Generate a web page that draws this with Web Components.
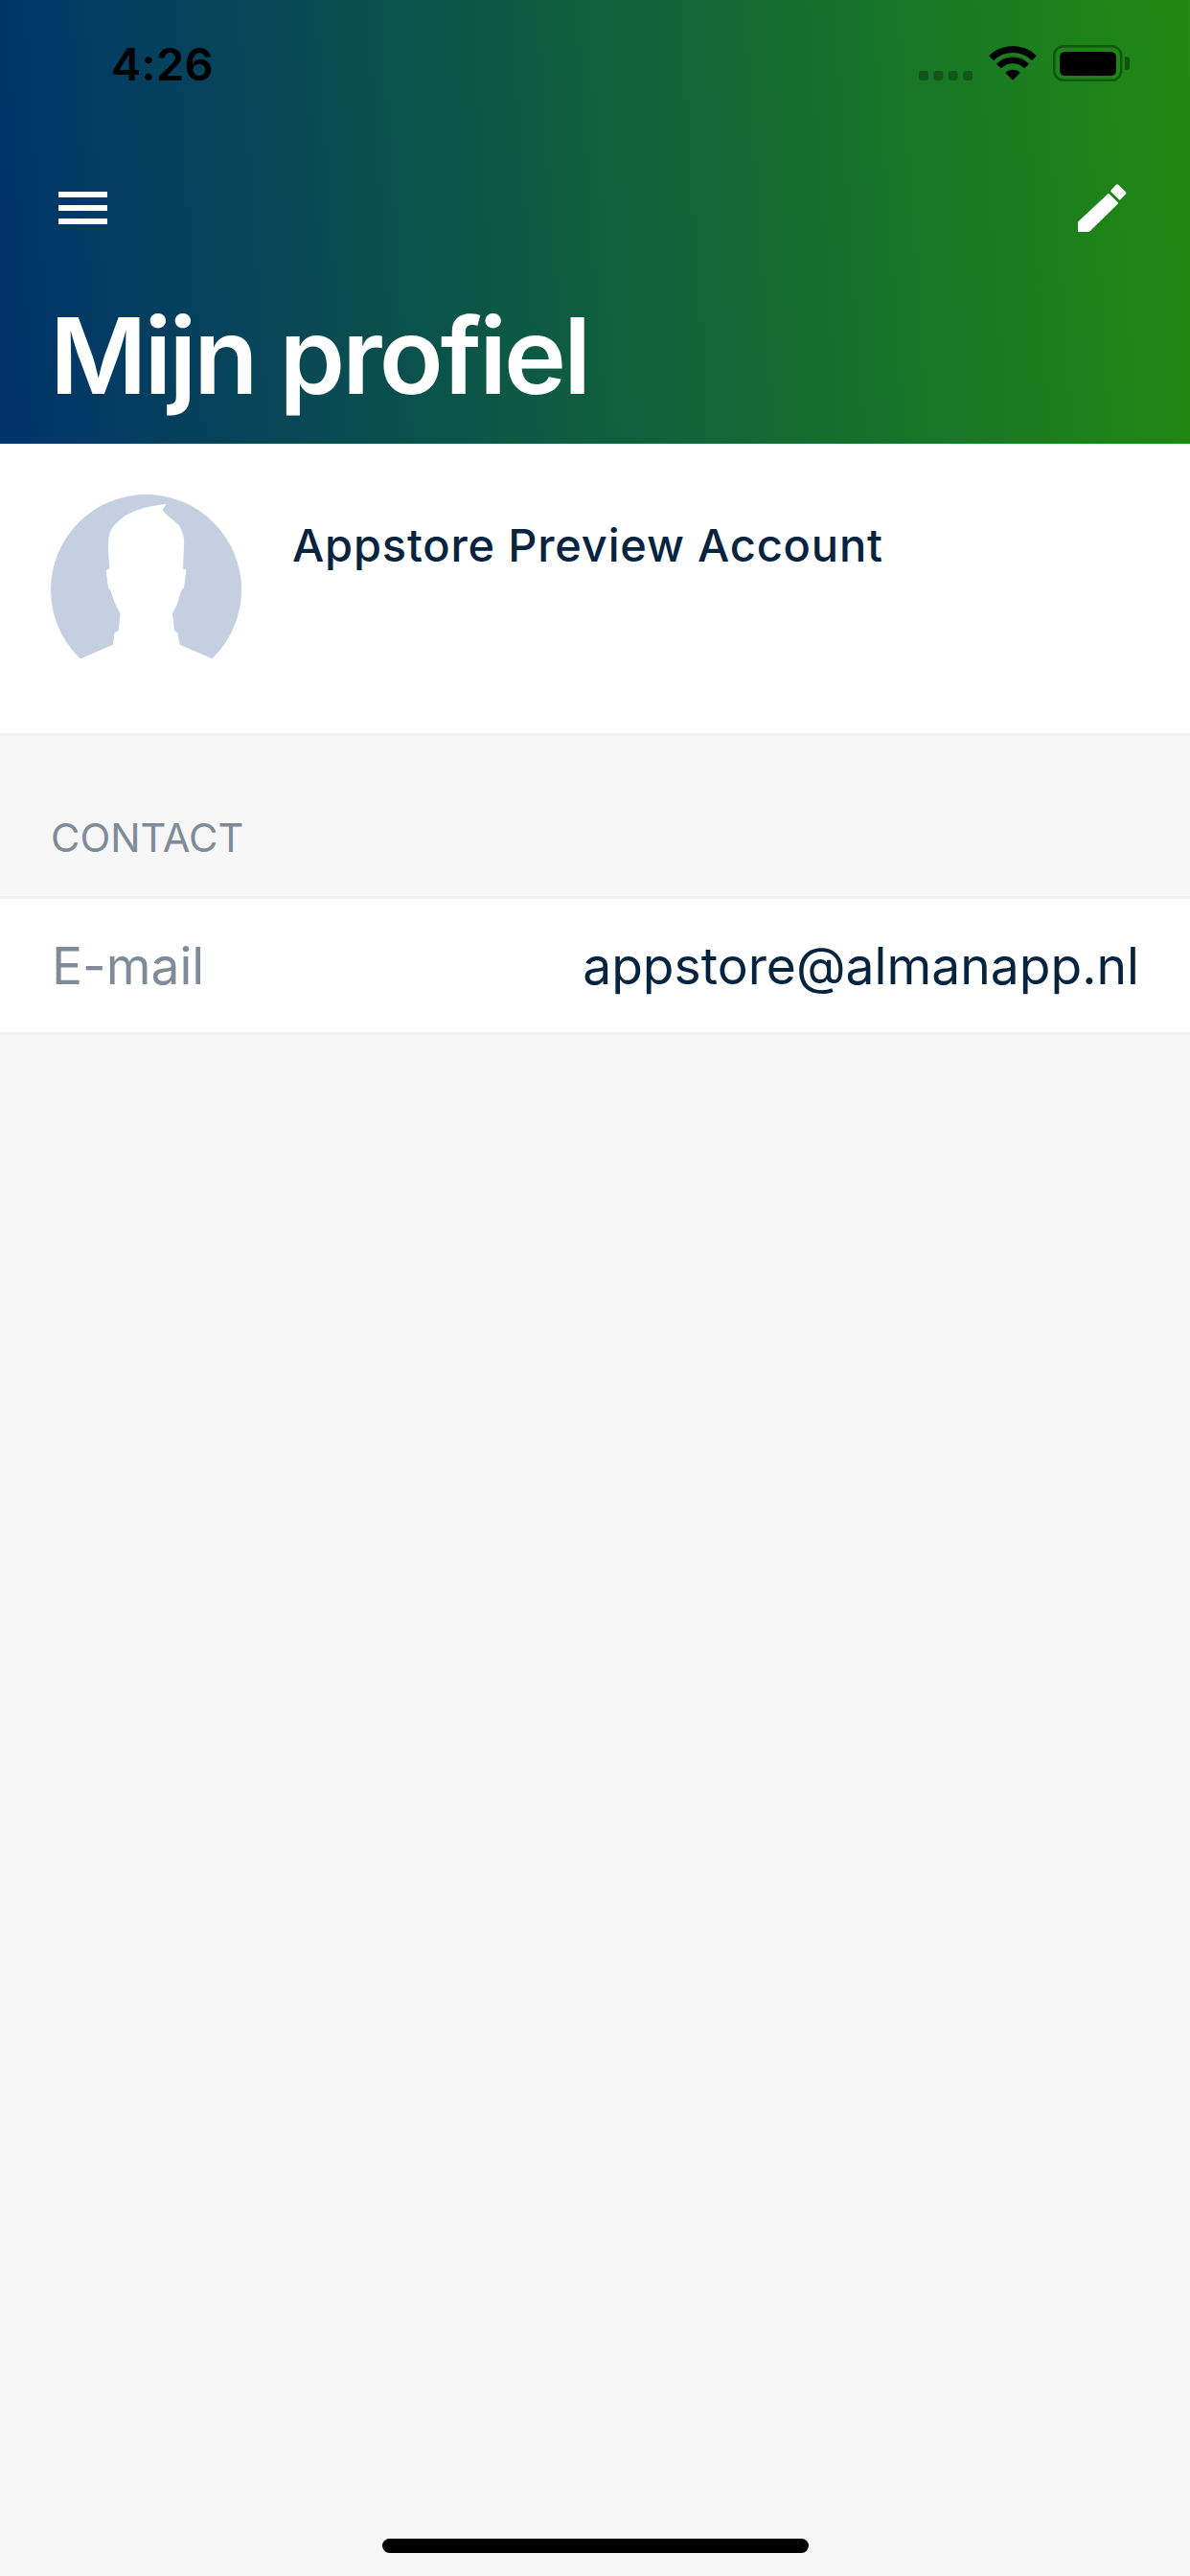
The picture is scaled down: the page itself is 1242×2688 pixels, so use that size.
<!DOCTYPE html>
<html lang="nl">
<head>
<meta charset="utf-8">
<title>Mijn profiel</title>
<style>
  html, body { margin: 0; padding: 0; background: #f7f7f7; font-family: Inter, "Liberation Sans", sans-serif; }
</style>
</head>
<body>
<profile-app>
  <app-header title-text="Mijn profiel"></app-header>
  <profile-card name="Appstore Preview Account"></profile-card>
  <section-label>CONTACT</section-label>
  <info-row label="E-mail" value="appstore@almanapp.nl"></info-row>
</profile-app>

<script>
function define(tag, html, init) {
  customElements.define(tag, class extends HTMLElement {
    connectedCallback() {
      if (this.shadowRoot) return;
      const root = this.attachShadow({ mode: 'open' });
      root.innerHTML = html;
      if (init) init(this, root);
    }
  });
}

define('profile-app', `
  <style>
    :host { display: flex; flex-direction: column; height: 2688px; background: #f7f7f7; overflow: hidden; }
    .space { flex: 1; }
    .home { flex: none; height: 39px; display: flex; justify-content: center; }
    .bar { width: 445px; height: 15px; border-radius: 8px; background: #000; }
  </style>
  <slot></slot>
  <div class="space"></div>
  <div class="home"><div class="bar"></div></div>
`);

define('status-bar', `
  <style>
    :host { display: flex; height: 132px; box-sizing: border-box; padding: 47px 63px 0 116px; justify-content: space-between; align-items: flex-start; color: #000; }
    .time { font: 600 47px/40px Inter, "Liberation Sans", sans-serif; letter-spacing: .3px; }
    svg { display: block; }
  </style>
  <div class="time">4:26</div>
  <svg width="220" height="40" viewBox="0 0 220 40" aria-hidden="true">
    <g fill="#000" fill-opacity=".28">
      <rect x="0" y="27" width="10" height="10" rx="3"/>
      <rect x="15.4" y="27" width="10" height="10" rx="3"/>
      <rect x="30.8" y="27" width="10" height="10" rx="3"/>
      <rect x="46.2" y="27" width="10" height="10" rx="3"/>
    </g>
    <g transform="translate(73 0) scale(.3333)">
      <path d="M75 110 L52 87 A32 32 0 0 1 98 87 Z" fill="#000"/>
      <path d="M31 66 A62 62 0 0 1 119 66" fill="none" stroke="#000" stroke-width="20"/>
      <path d="M8 41 A96 96 0 0 1 142 41" fill="none" stroke="#000" stroke-width="21"/>
    </g>
    <rect x="141.2" y="1.2" width="70" height="35.6" rx="10" fill="none" stroke="#000" stroke-opacity=".35" stroke-width="2.4"/>
    <rect x="147" y="7" width="59" height="25" rx="5.5" fill="#000"/>
    <path d="M215 12 A8 7 0 0 1 215 26 Z" fill="#000" fill-opacity=".4"/>
  </svg>
`);

define('app-header', `
  <style>
    :host { display: block; height: 463px; color: #fff; background: linear-gradient(86deg, #00336b 0%, #208a12 100%); }
    .tools { display: flex; justify-content: space-between; align-items: center; height: 50px; margin-top: 60px; padding: 0 66px 0 61px; }
    .menu { display: flex; flex-direction: column; gap: 8px; width: 51px; }
    .menu i { display: block; height: 6px; background: #fff; }
    h1 { margin: 0; padding: 65px 0 0 52px; font: 600 110px/128px Inter, "Liberation Sans", sans-serif; letter-spacing: -2.9px; white-space: nowrap; }
    svg { display: block; }
  </style>
  <status-bar></status-bar>
  <div class="tools">
    <div class="menu"><i></i><i></i><i></i></div>
    <svg width="51" height="50" viewBox="0 0 153 150" aria-hidden="true">
      <path d="M3 120 L96 33 L123 60 L34 147 L3 147 Z" fill="#fff" stroke="#fff" stroke-width="6" stroke-linejoin="round"/>
      <path d="M123 6 L146 28 L131 44 L108 22 Z" fill="#fff" stroke="#fff" stroke-width="10" stroke-linejoin="round"/>
    </svg>
  </div>
  <h1></h1>
`, (el, root) => { root.querySelector('h1').textContent = el.getAttribute('title-text'); });

define('profile-card', `
  <style>
    :host { display: flex; align-items: flex-start; gap: 53px; height: 302px; padding: 0 0 0 53px; background: #fff; border-bottom: 3px solid #f0f0f0; color: #06233f; }
    svg { display: block; flex: none; margin-top: 53px; }
    .name { margin-top: 80px; font: 500 47px/52px Inter, "Liberation Sans", sans-serif; letter-spacing: .8px; white-space: nowrap; }
  </style>
  <svg width="199" height="172" viewBox="68 78 597 516" aria-hidden="true">
    <circle cx="366.500" cy="376.500" r="298.500" fill="#c4cfe2"/>
    <path fill="#fff" d="M162 592 L262 548 L268 510 L280 505 L286 450 C272 428 262 405 255 378 L248 370 L241 315 L252 310 C250 270 245 240 250 210 C255 180 275 165 300 145 C340 122 385 112 430 108 L418 125 C425 140 450 155 470 175 C482 195 487 215 485 240 L482 310 L492 315 L485 370 L476 380 C470 405 462 430 449 450 L455 505 L465 510 L472 548 L573 592 L700 592 L700 600 L40 600 L40 592 Z"/>
  </svg>
  <div class="name"></div>
`, (el, root) => { root.querySelector('.name').textContent = el.getAttribute('name'); });

define('section-label', `
  <style>
    :host { display: flex; align-items: flex-end; height: 170px; box-sizing: border-box; padding: 0 0 36px 53px; font: 400 41.600px/50px Inter, "Liberation Sans", sans-serif; color: #7f8b98; border-bottom: 3px solid #f0f0f0; }
  </style>
  <slot></slot>
`);

define('info-row', `
  <style>
    :host { display: flex; justify-content: space-between; align-items: center; height: 139px; padding: 0 53px 0 54px; background: #fff; border-bottom: 3px solid #f0f0f0; font: 400 53.400px/60px Inter, "Liberation Sans", sans-serif; color: #06233f; }
    .label { color: #7f8b98; }
  </style>
  <span class="label"></span><span class="value"></span>
`, (el, root) => {
  root.querySelector('.label').textContent = el.getAttribute('label');
  root.querySelector('.value').textContent = el.getAttribute('value');
});
</script>
</body>
</html>
